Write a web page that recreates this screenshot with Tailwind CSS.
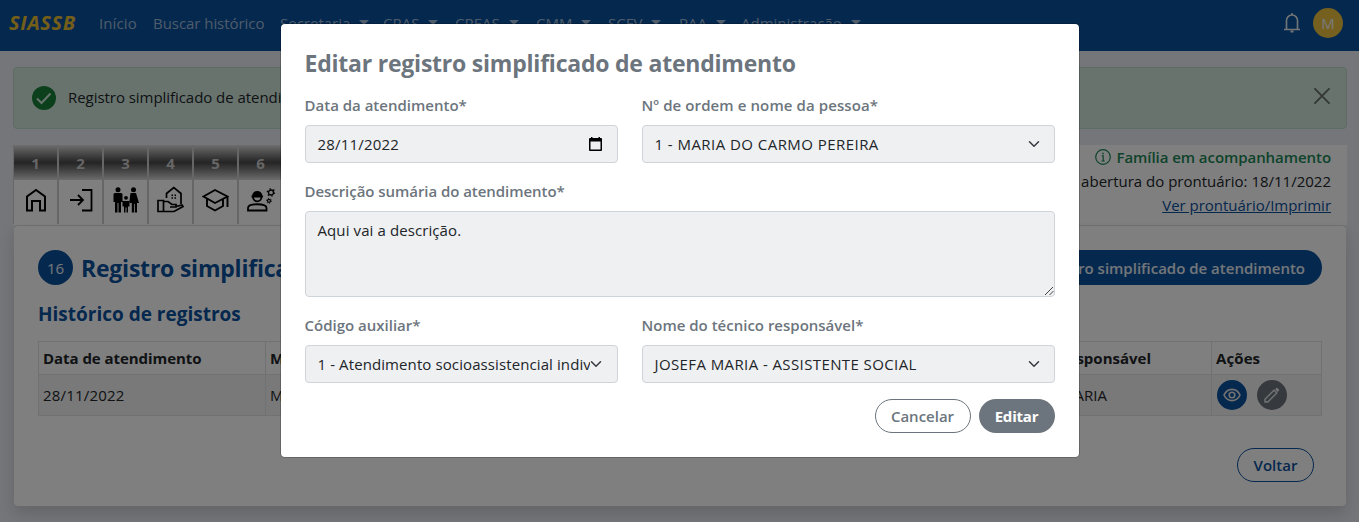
<!DOCTYPE html>
<html lang="pt-BR">
<head>
<meta charset="utf-8">
<title>SIASSB</title>
<script src="https://cdn.jsdelivr.net/npm/@tailwindcss/browser@4"></script>
</head>
<body class="h-[522px] overflow-hidden bg-[#e9ecf2] font-['Open_Sans','Noto_Sans',sans-serif] text-[15px] leading-6 text-[#212529]">
<nav class="flex h-[51px] items-center bg-[#0a509c] pl-[9px] pr-4 pb-1.5 text-white/60">
  <a class="w-[90px] text-[20px] font-bold italic tracking-[0.6px] text-[#e6be32]">SIASSB</a>
  <a class="w-[54px] tracking-[0.1px]">Início</a>
  <a class="w-[127px] whitespace-nowrap tracking-[-0.05px]">Buscar histórico</a>
  <a class="flex w-[103px] items-center gap-[9px]">Secretaria<i class="border-x-[5px] border-t-[5px] border-x-transparent border-t-white/60"></i></a>
  <a class="flex w-[72px] items-center gap-[9px]">CRAS<i class="border-x-[5px] border-t-[5px] border-x-transparent border-t-white/60"></i></a>
  <a class="flex w-[81px] items-center gap-[9px]">CREAS<i class="border-x-[5px] border-t-[5px] border-x-transparent border-t-white/60"></i></a>
  <a class="flex w-[72px] items-center gap-[9px]">CMM<i class="border-x-[5px] border-t-[5px] border-x-transparent border-t-white/60"></i></a>
  <a class="flex w-[71px] items-center gap-[9px]">SCFV<i class="border-x-[5px] border-t-[5px] border-x-transparent border-t-white/60"></i></a>
  <a class="flex w-[62px] items-center gap-[9px]">PAA<i class="border-x-[5px] border-t-[5px] border-x-transparent border-t-white/60"></i></a>
  <a class="flex items-center gap-[9px]">Administração<i class="border-x-[5px] border-t-[5px] border-x-transparent border-t-white/60"></i></a>
  <svg class="ml-auto mr-3 h-[21px] w-[18px]" viewBox="0 0 18 21" fill="none" stroke="#e8eaee" stroke-width="1.6"><path d="M1 17.5h16M3.500 17V8.500a5.500 5.500 0 0 1 11 0V17M9 3V1"/><path d="M7.500 19.500h3" stroke-width="2"/></svg>
  <span class="flex size-[30px] items-center justify-center rounded-full bg-[#ebc041] text-[#f4f4f4]">M</span>
</nav>
<main class="pt-4 pr-3 pl-[13px]">
  <section class="flex h-[62px] items-center rounded border border-[#badbcc] bg-[#d1e7dd] pl-[18px] pr-4">
    <svg class="mr-3 size-6" viewBox="0 0 24 24"><circle cx="12" cy="12" r="12" fill="#198038"/><path d="M5 12.500l4.500 4.500L18.500 7.500" fill="none" stroke="#d1e7dd" stroke-width="2"/></svg>
    <span class="-mt-0.5 tracking-[-0.05px]">Registro simplificado de atendimento editado com sucesso!</span>
    <svg class="mb-1 ml-auto size-4" viewBox="0 0 16 16" stroke="#666e6a" stroke-width="1.800" stroke-linecap="round"><path d="M1 0.800l14 14.400M15 0.800L1 15.200"/></svg>
  </section>
  <section class="mt-4 flex h-20 justify-between bg-white">
    <div class="flex h-[79px] gap-0.5 bg-[#cdcdcd] pl-px">
      <div class="w-[43px] bg-white"><b class="flex h-[35px] items-center justify-center bg-linear-to-b from-[#ddd] via-[#4a4a4a] to-[#d8d8d8] text-[#ccc]">1</b><div class="flex h-11 items-center justify-center pb-1"><svg class="h-6 w-6" viewBox="0 0 24 24" fill="none" stroke="black" stroke-width="2"><path d="M3 22.500V8.500L12 2l9 6.500v14h-5v-9.500H8v9.500z"/></svg></div></div>
      <div class="w-[43px] bg-white"><b class="flex h-[35px] items-center justify-center bg-linear-to-b from-[#ddd] via-[#4a4a4a] to-[#d8d8d8] text-[#ccc]">2</b><div class="flex h-11 items-center justify-center pb-1"><svg class="size-6" viewBox="0 0 24 24" fill="none" stroke="black" stroke-width="1.800"><path d="M13 2h9.500v20.500H13M1 12h13M9 7l5 5-5 5"/></svg></div></div>
      <div class="w-[43px] bg-white"><b class="flex h-[35px] items-center justify-center bg-linear-to-b from-[#ddd] via-[#4a4a4a] to-[#d8d8d8] text-[#ccc]">3</b><div class="flex h-11 items-center justify-center pb-1"><svg class="h-[26px] w-[26px]" viewBox="0 0 26 26"><circle cx="5" cy="2.700" r="2.500"/><circle cx="20.500" cy="2.700" r="2.500"/><circle cx="13" cy="10.800" r="1.900"/><path d="M.5 7.500q0-1.500 1.500-1.500h6q1.500 0 1.500 1.500V15H8v10.500H5.500V16h-1v9.500H2V15H.5zM17.500 6h5.500l3 10h-2v9.500h-2.200V17h-.8v8.500h-2.200V16H17l-.5-2zM9.500 14h7v5.500H15v6h-1.500v-5h-1v5H11v-6H9.500z"/></svg></div></div>
      <div class="w-[43px] bg-white"><b class="flex h-[35px] items-center justify-center bg-linear-to-b from-[#ddd] via-[#4a4a4a] to-[#d8d8d8] text-[#ccc]">4</b><div class="flex h-11 items-center justify-center pb-1.5"><svg class="size-[27px]" viewBox="0 0 27 27" fill="none" stroke="black" stroke-width="1.700"><path d="M9.500 12V7.500L16.800 1.500 24 7.500V18M1 14.500h5.500v11H1zM6.500 15.500H11l4 3h4v2.500h-6M19 20.500l6-1.500 1 1.500-9 5H6.500"/><path d="M14.500 9.300h1.500m1.500 0h1.500M14.500 12h1.500m1.500 0h1.500" stroke-width="1.400"/></svg></div></div>
      <div class="w-[43px] bg-white"><b class="flex h-[35px] items-center justify-center bg-linear-to-b from-[#ddd] via-[#4a4a4a] to-[#d8d8d8] text-[#ccc]">5</b><div class="flex h-11 items-center justify-center pb-1"><svg class="h-6 w-[27px]" viewBox="0 0 27 24" fill="none" stroke="black" stroke-width="1.900"><path d="M1.500 8.500L13 2 25.500 8.500 13 15zM5 10.500v7.500l8 4.500 8-4.500v-7.500M25.500 8.500V19"/></svg></div></div>
      <div class="w-[43px] bg-white"><b class="flex h-[35px] items-center justify-center bg-linear-to-b from-[#ddd] via-[#4a4a4a] to-[#d8d8d8] text-[#ccc]">6</b><div class="flex h-11 items-center justify-center pb-1"><svg class="h-6 w-7" viewBox="0 0 28 24" fill="none" stroke="black" stroke-width="1.800"><path d="M1 22.500v-2.500c0-5 18.500-5 18.500 0v2.500zM6 8.500c0 6.500 8.500 6.500 8.500 0"/><path d="M4.500 8.500h11.500M6 8c0-5.500 8.500-5.500 8.500 0z" fill="black"/><circle cx="24" cy="4.500" r="2.500" stroke-width="1.300"/><circle cx="24" cy="4.500" r="3.700" stroke-dasharray="1.400 2.480" stroke-width="1.200"/><circle cx="22" cy="12.800" r="1.500" stroke-width="1.200"/><circle cx="22" cy="12.800" r="2.500" stroke-dasharray="1 1.618" stroke-width="1"/></svg></div></div>
    </div>
    <div class="flex flex-col items-end pr-4">
      <b class="flex items-center gap-1.5 font-semibold tracking-[-0.06px] text-[#198754]"><svg class="size-4" viewBox="0 0 16 16" fill="none" stroke="#198754" stroke-width="1.200"><circle cx="8" cy="8" r="7.300"/><path d="M6.800 6.800h1.400v5M6.500 12h3.200"/><path d="M8 3.800v1.500" stroke-width="1.500"/></svg>Família em acompanhamento</b>
      <span>Data de abertura do prontuário: 18/11/2022</span>
      <a class="tracking-[-0.02px] text-[#0a509c] underline">Ver prontuário/Imprimir</a>
    </div>
  </section>
  <section class="mx-px h-[281px] rounded border-t border-[#ddd] bg-white px-6 pt-6 shadow-[0_8px_16px_rgba(0,0,0,0.15)]">
    <header class="flex items-center">
      <span class="mr-2 flex size-[35px] items-center justify-center rounded-full bg-[#0a509c] text-white/90">16</span>
      <h1 class="text-[23px] font-bold tracking-[-0.22px] text-[#0a509c]">Registro simplificado de atendimento</h1>
      <a class="ml-auto flex h-[35px] items-center rounded-full bg-[#0a509c] pr-[17px] pl-4 font-semibold text-white/90">Novo registro simplificado de atendimento</a>
    </header>
    <h2 class="mt-[17px] text-[19px] font-bold text-[#0a509c]">Histórico de registros</h2>
    <table class="mt-[15px] w-full table-fixed border-collapse text-left">
      <colgroup><col class="w-[227px]"><col class="w-[600px]"><col><col class="w-[110px]"></colgroup>
      <tr class="h-[33px]"><th class="border border-[#dee2e6] px-1 font-bold tracking-[-0.05px]">Data de atendimento</th><th class="border border-[#dee2e6] px-1">Membro</th><th class="border border-[#dee2e6] px-1 pr-[60px] text-right">Técnico responsável</th><th class="border border-[#dee2e6] px-1 tracking-[0.1px]">Ações</th></tr>
      <tr class="h-[41px] bg-[#f2f2f2]"><td class="border border-[#dee2e6] px-1 tracking-[0.2px]">28/11/2022</td><td class="border border-[#dee2e6] px-1">MARIA DO CARMO PEREIRA</td><td class="border border-[#dee2e6] px-1 pr-[104px] text-right">JOSEFA MARIA</td>
      <td class="border border-[#dee2e6] px-[5px]"><div class="flex gap-2.5">
        <span class="flex size-[30px] items-center justify-center rounded-full bg-[#0a509c]"><svg class="h-[14px] w-[18px]" viewBox="0 0 18 14" fill="none" stroke="#e6e6e6" stroke-width="1.600"><path d="M1 7c3.500-7.500 12.500-7.500 16 0-3.500 7.500-12.500 7.500-16 0z"/><circle cx="9" cy="7" r="2.800"/></svg></span>
        <span class="flex size-[30px] items-center justify-center rounded-full bg-[#6c757d]"><svg class="size-4" viewBox="0 0 16 16" fill="none" stroke="#e6e6e6" stroke-width="1.400"><path d="M1 15v-2.800L10 3.200l2.800 2.800L3.800 15z"/><path d="M12 1.500l2.500 2.500" stroke-width="2.600"/></svg></span>
      </div></td></tr>
    </table>
    <div class="mt-8 flex justify-end pr-2"><a class="flex h-[34px] w-[77px] items-center justify-center rounded-full border border-[#0a509c] font-semibold text-[#0a509c]">Voltar</a></div>
  </section>
</main>
<div class="absolute inset-0 flex items-start justify-center bg-black/50 pt-6">
  <form class="w-[798px] rounded bg-white px-6 pt-[23px] pb-6 ring-1 ring-black/20">
    <h3 class="text-[23px] leading-8 font-bold tracking-[-0.22px] text-[#6c757d]">Editar registro simplificado de atendimento</h3>
    <div class="mt-3.5 grid grid-cols-[313px_413px] gap-x-6 gap-y-4 text-[#212529]">
      <div><label class="mb-2 block font-semibold text-[#6c757d]">Data da atendimento*</label>
        <div class="flex h-[38px] items-center justify-between rounded border border-[#ced4da] bg-[#eff0f2] pr-[15px] pl-3 tracking-[0.2px]">28/11/2022<svg class="mb-px h-[14px] w-[13px]" viewBox="0 0 13 14"><path d="M0 2q0-1 1-1h1V0h1.500v1h6V0H11v1h1q1 0 1 1v11q0 1-1 1H1q-1 0-1-1zM1.500 4.500v8h10v-8z" fill-rule="evenodd"/></svg></div></div>
      <div><label class="mb-2 block font-semibold tracking-[0.1px] text-[#6c757d]">Nº de ordem e nome da pessoa*</label>
        <div class="flex h-[38px] items-center justify-between rounded border border-[#ced4da] bg-[#eff0f2] pr-3.5 pl-3 tracking-[0.45px]">1 - MARIA DO CARMO PEREIRA<svg class="size-3" viewBox="0 0 16 16" fill="none" stroke="#343a40" stroke-width="2" stroke-linecap="round" stroke-linejoin="round"><path d="M2 5l6 6 6-6"/></svg></div></div>
      <div class="col-span-2"><label class="mb-2 block font-semibold tracking-[-0.05px] text-[#6c757d]">Descrição sumária do atendimento*</label>
        <div class="flex h-[86px] items-start justify-between rounded border border-[#ced4da] bg-[#eff0f2] pt-1.5 pl-3 tracking-[0.1px]">Aqui vai a descrição.<svg class="size-[9px] self-end" viewBox="0 0 9 9" stroke="#444" stroke-width="1"><path d="M0 8l8-8M4.500 8l4-4"/></svg></div></div>
      <div><label class="mb-2 block font-semibold text-[#6c757d]">Código auxiliar*</label>
        <div class="flex h-[38px] items-center rounded border border-[#ced4da] bg-[#eff0f2] pr-3.5 pl-3"><span class="w-[272px] overflow-hidden whitespace-nowrap tracking-[0.1px]">1 - Atendimento socioassistencial individualizado</span><svg class="size-3 shrink-0" viewBox="0 0 16 16" fill="none" stroke="#343a40" stroke-width="2" stroke-linecap="round" stroke-linejoin="round"><path d="M2 5l6 6 6-6"/></svg></div></div>
      <div><label class="mb-2 block font-semibold text-[#6c757d]">Nome do técnico responsável*</label>
        <div class="flex h-[38px] items-center justify-between rounded border border-[#ced4da] bg-[#eff0f2] pr-3.5 pl-3 tracking-[0.4px]">JOSEFA MARIA - ASSISTENTE SOCIAL<svg class="size-3" viewBox="0 0 16 16" fill="none" stroke="#343a40" stroke-width="2" stroke-linecap="round" stroke-linejoin="round"><path d="M2 5l6 6 6-6"/></svg></div></div>
    </div>
    <div class="mt-4 flex justify-end gap-2"><button type="button" class="h-[34px] w-24 rounded-full border border-[#6c757d] font-semibold text-[#6c757d]">Cancelar</button><button type="button" class="h-[34px] w-[76px] rounded-full bg-[#6c757d] font-bold tracking-[-0.2px] text-white">Editar</button></div>
  </form>
</div>
</body>
</html>
